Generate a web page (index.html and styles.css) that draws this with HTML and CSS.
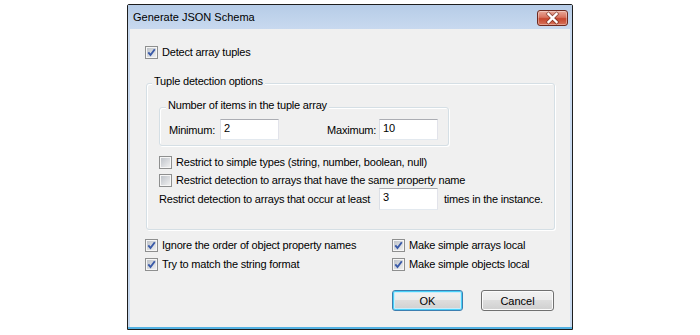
FILE: index.html
```html
<!DOCTYPE html>
<html lang="en">
<head>
  <meta charset="UTF-8" />
  <title>Generate JSON Schema</title>
  <link rel="stylesheet" href="styles.css">
</head>
<body>

  <div class="window">
    <div class="titlebar">
      <span class="title">Generate JSON Schema</span>
      <span class="close">
        <svg width="29" height="14" viewBox="0 0 29 14">
          <path d="M10.5 3 L18.5 11 M18.5 3 L10.5 11" stroke="#5a1f16" stroke-width="4" stroke-linecap="square" opacity="0.55" />
          <path d="M10.5 3 L18.5 11 M18.5 3 L10.5 11" stroke="#fff" stroke-width="2.4" stroke-linecap="square" />
        </svg>
      </span>
    </div>

    <div class="client">
      <div class="check"><span class="box on"><svg width="11" height="11" viewBox="0 0 11 11"><path d="M2.3 5.3 L4.5 8 L8.8 2.2" /></svg></span><span>Detect array tuples</span></div>

      <div class="group outer">
        <div class="legend">Tuple detection options</div>

        <div class="group inner">
          <div class="legend">Number of items in the tuple array</div>
          <div class="field-row">
            <span class="lbl-min">Minimum:</span>
            <input class="textbox" type="text" value="2">
            <span class="lbl-max">Maximum:</span>
            <input class="textbox" type="text" value="10">
          </div>
        </div>

        <div class="check first"><span class="box"></span><span>Restrict to simple types (string, number, boolean, null)</span></div>
        <div class="check next"><span class="box"></span><span>Restrict detection to arrays that have the same property name</span></div>

        <div class="field-row occur">
          <span class="lbl-occur">Restrict detection to arrays that occur at least</span>
          <input class="textbox tall" type="text" value="3">
          <span class="lbl-times">times in the instance.</span>
        </div>
      </div>

      <div class="options">
        <div class="check"><span class="box on"><svg width="11" height="11" viewBox="0 0 11 11"><path d="M2.3 5.3 L4.5 8 L8.8 2.2" /></svg></span><span>Ignore the order of object property names</span></div>
        <div class="check"><span class="box on"><svg width="11" height="11" viewBox="0 0 11 11"><path d="M2.3 5.3 L4.5 8 L8.8 2.2" /></svg></span><span>Make simple arrays local</span></div>
        <div class="check"><span class="box on"><svg width="11" height="11" viewBox="0 0 11 11"><path d="M2.3 5.3 L4.5 8 L8.8 2.2" /></svg></span><span>Try to match the string format</span></div>
        <div class="check"><span class="box on"><svg width="11" height="11" viewBox="0 0 11 11"><path d="M2.3 5.3 L4.5 8 L8.8 2.2" /></svg></span><span>Make simple objects local</span></div>
      </div>

      <div class="buttons">
        <button class="btn default">OK</button>
        <button class="btn cancel">Cancel</button>
      </div>
    </div>
  </div>

</body>
</html>
```

FILE: styles.css
```css
* { box-sizing: border-box; }
body { margin: 0; background: #fff; font-family: "Liberation Sans", Arial, sans-serif; font-size: 11px; letter-spacing: -0.2px; color: #000; }

/* window frame */
.window { width: 446px; height: 326px; margin: 4px 0 0 127px; border: 1px solid #1e1e1e; border-radius: 2px 2px 0 0; display: flex; flex-direction: column; padding-bottom: 2px; background: linear-gradient(#c9daef, #c9daef calc(100% - 2px), #52b1e2 calc(100% - 2px)); }
.titlebar { height: 24px; flex: none; display: flex; align-items: center; justify-content: space-between; padding: 0 4px 0 5px; background: linear-gradient(#b6cce7, #c8d9ef); }
.title { font-size: 11px; letter-spacing: 0; color: #000; }
.close { width: 31px; height: 16px; margin-top: 1px; border: 1px solid #6e2a20; border-radius: 3px; display: flex; align-items: center; justify-content: center; background: linear-gradient(#e9a99a, #d8735f 45%, #c6462e 55%, #d7735c); box-shadow: inset 0 0 0 1px rgba(255,255,255,0.35); }
.close svg { display: block; }
.client { flex: 1; margin: 0 2px; background: #f0f0f0; padding: 17px 16px 0 15px; }

/* checkboxes */
.check { display: flex; align-items: center; gap: 4px; height: 13px; line-height: 13px; white-space: nowrap; }
.box { width: 13px; height: 13px; flex: none; border: 1px solid #8e8f8f; background: linear-gradient(135deg, #b9bec5, #f4f4f4); box-shadow: inset 0 0 0 1px #f6f6f6; }
.box svg { display: block; }
.box path { fill: none; stroke: #3a5aa8; stroke-width: 1.9; }
.check.first { margin-top: 10px; }
.check.next { margin-top: 5px; }

/* group boxes */
.group { border: 1px solid #d5dfe5; border-radius: 3px; box-shadow: inset 1px 1px 0 #fff, 1px 1px 0 #fff; }
.legend { width: fit-content; margin-top: -9px; padding: 0 2px; line-height: 13px; background: #f0f0f0; white-space: nowrap; }
.outer { width: 409px; margin: 24px 0 0 1px; padding: 0 0 19px 12px; }
.outer > .legend { margin-left: -7px; }
.inner { width: 290px; margin-top: 19px; padding: 0 0 5px 9px; }
.inner > .legend { margin-left: -3px; }

/* text fields */
.field-row { display: flex; align-items: center; height: 21px; margin-top: 7px; white-space: nowrap; }
.lbl-min { width: 51px; }
.lbl-max { width: 52px; margin-left: 48px; }
.textbox { width: 59px; height: 21px; margin: 0; padding: 1px 0 5px 3px; border: 1px solid #abadb3; border-left-color: #dbdfe6; border-right-color: #e2e3ea; border-bottom-color: #e3e9ef; background: #fff; font: 11px/13px "Liberation Sans", Arial, sans-serif; color: #000; outline: none; }
.textbox.tall { height: 22px; padding-bottom: 6px; }
.occur { height: 22px; margin-top: 1px; }
.lbl-occur { width: 220px; }
.lbl-times { margin-left: 6px; }

/* bottom options */
.options { display: grid; grid-template-columns: 247px auto; row-gap: 6px; margin-top: 9px; }

/* buttons */
.buttons { display: flex; justify-content: flex-end; gap: 18px; margin-top: 19px; }
.btn { height: 21px; padding: 0; border: 1px solid #707070; border-radius: 3px; font: 11px "Liberation Sans", Arial, sans-serif; color: #000; background: linear-gradient(#f2f2f2, #ebebeb 50%, #dddddd 50%, #cfcfcf); box-shadow: inset 0 0 0 1px #fbfbfb; }
.btn.default { width: 71px; border-color: #3c7fb1; box-shadow: inset 0 0 0 1px #48d0f8, inset 0 0 0 2px #c8ecfb; }
.btn.cancel { width: 73px; }
```
